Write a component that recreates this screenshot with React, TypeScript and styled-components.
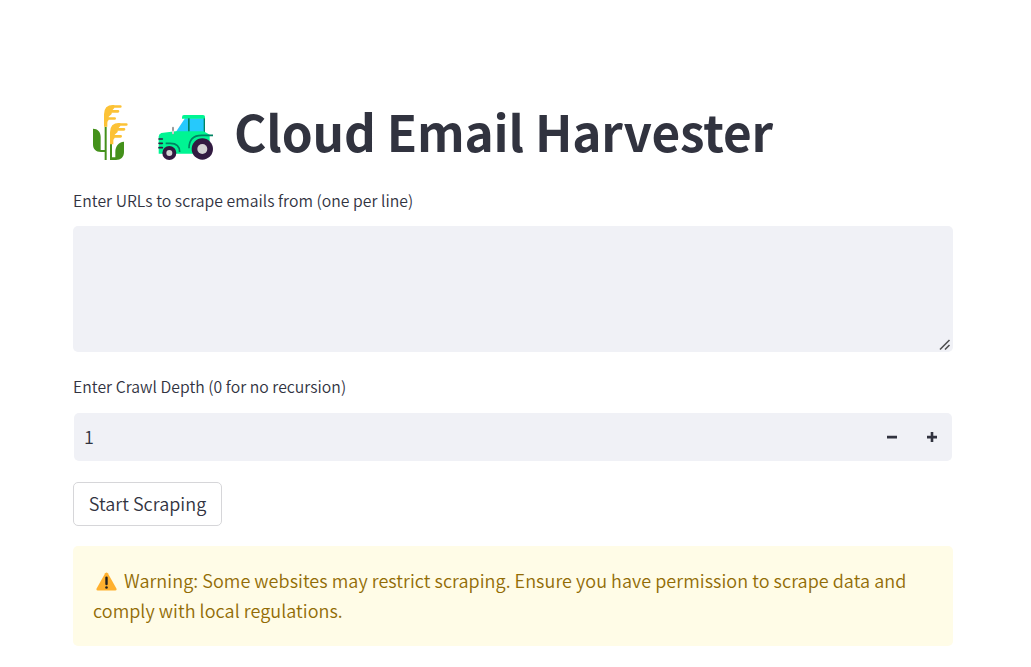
import React, { useState } from "react";
import styled, { createGlobalStyle } from "styled-components";

const GlobalStyle = createGlobalStyle`
  * {
    box-sizing: border-box;
  }
  body {
    margin: 0;
    background: #ffffff;
    color: #31333f;
    font-family: "Noto Sans CJK SC", "Noto Sans", sans-serif;
    font-size: 18px;
    font-weight: 350;
    letter-spacing: 0.05px;
  }
`;

const Page = styled.main`
  display: flex;
  flex-direction: column;
  width: 880px;
  margin: 0 auto 0 73px;
  padding-top: 101px;
`;

const Title = styled.h1`
  display: flex;
  align-items: flex-end;
  height: 66px;
  margin: 0 0 21px;
  padding: 0 0 7px 19px;
  font-size: 49.5px;
  font-weight: 700;
  line-height: 53px;
  white-space: nowrap;
`;

const TitleText = styled.span`
  margin-left: 20px;
  padding-bottom: 3px;
  letter-spacing: -0.17px;
`;

const HarvestSvg = styled.svg`
  flex: none;
  width: 37px;
  height: 56px;
  margin-right: 29px;
`;

const TractorSvg = styled.svg`
  flex: none;
  width: 56px;
  height: 46px;
`;

const Field = styled.div<{ $gap: number; $bottom: number }>`
  display: flex;
  flex-direction: column;
  gap: ${(p) => p.$gap}px;
  margin-bottom: ${(p) => p.$bottom}px;
`;

const Label = styled.label`
  height: 26px;
  font-size: 15.75px;
  line-height: 26px;
  letter-spacing: 0.03px;
  white-space: nowrap;
`;

const AreaWrapper = styled.div`
  position: relative;
  height: 126px;
`;

const Area = styled.textarea`
  display: block;
  width: 100%;
  height: 100%;
  padding: 12px;
  border: none;
  border-radius: 5px;
  outline: none;
  background: #f0f1f6;
  color: inherit;
  font: inherit;
  resize: none;
`;

const Grip = styled.svg`
  position: absolute;
  right: 2px;
  bottom: 1px;
  width: 12px;
  height: 12px;
`;

const NumberBox = styled.div`
  display: flex;
  height: 48px;
  margin: 0 1px;
  border-radius: 5px;
  background: #f0f1f6;
  overflow: hidden;
`;

const NumberInput = styled.input`
  flex: 1;
  min-width: 0;
  padding: 0 0 2px 10px;
  border: none;
  outline: none;
  background: transparent;
  color: inherit;
  font: inherit;
`;

const StepButton = styled.button`
  display: flex;
  align-items: center;
  justify-content: center;
  width: 40px;
  padding: 0;
  border: none;
  background: transparent;
  color: #31333f;
  cursor: pointer;
`;

const StartButton = styled.button`
  align-self: flex-start;
  width: 149px;
  height: 44px;
  margin-bottom: 20px;
  padding: 0 0 2px;
  border: 1px solid #d6d6d9;
  border-radius: 5px;
  background: #ffffff;
  color: inherit;
  font: inherit;
  letter-spacing: inherit;
  white-space: nowrap;
  cursor: pointer;
`;

const Alert = styled.div`
  height: 100px;
  padding: 19px 20px 21px;
  border-radius: 5px;
  background: #fffce7;
  color: #926c05;
  line-height: 30px;
`;

const AlertLine = styled.div`
  display: flex;
  align-items: center;
  height: 30px;
  white-space: nowrap;
`;

const WarningSvg = styled.svg`
  width: 21px;
  height: 19px;
  margin: 2px 7px 0 3px;
`;

const HarvestIcon = () => (
  <HarvestSvg viewBox="36 27 111 168">
    <path d="M39 101c14 0 23 9 23 24v40h12V95h6v100h-6v-24H63c-16 0-24-9-24-23z" fill="#44911b" />
    <path d="M90 146h6v41h10v-16c0-17 9-30 26-31v31c0 16-10 24-24 24H90z" fill="#44911b" />
    <g fill="#fcc236" stroke="#fcc236" strokeLinecap="round">
      <path d="M72 95V58q0-28 27-28h4v9l-8 9v9l-9 8v10q-4 4-4 8v12z" stroke="none" />
      <path d="M98 34.500h23M90 49h24M84 70.500h20" strokeWidth="8" />
      <path d="M90 148v-36q0-28 27-28h4v9l-8 9v9l-9 8v10q-4 4-4 8v11z" stroke="none" />
      <path d="M116 88.500h23M108 103h24M102 124h20" strokeWidth="8" />
    </g>
  </HarvestSvg>
);

const TractorIcon = () => (
  <TractorSvg viewBox="24 27 168 138">
    <path d="M105 40h57v45H75z" fill="#26c9fc" />
    <path d="M102 30h57q6 0 6 6v5H96v-4q0-7 6-7z" fill="#00f593" />
    <path d="M114 40h5v43h-5zM161 40h4v44h-4z" fill="#008463" />
    <path d="M34 84l42-5h85l18 10v20l-40 37H26V95q0-8 8-11z" fill="#00f593" />
    <path d="M47 115h14q28 0 28 26M117 130q0-39 38-39h34" fill="none" stroke="#008463" strokeWidth="5" />
    <path d="M66 68q0-3 3-3t3 3v20h-6z" fill="#9b9b9b" />
    <path d="M66 77h6v9h-6z" fill="#d3d3d3" />
    <path d="M27 102h10M27 115h10M27 128h10" stroke="#321b41" strokeWidth="5" strokeLinecap="round" />
    <circle cx="157" cy="132" r="32" fill="#321b41" />
    <circle cx="157" cy="132" r="15" fill="#d3d3d3" />
    <circle cx="58" cy="144" r="21" fill="#321b41" />
    <circle cx="58" cy="144" r="9" fill="#d3d3d3" />
  </TractorSvg>
);

const WarningIcon = () => (
  <WarningSvg viewBox="0 0 21 19">
    <path d="M9.200 1.300q1.300-1.700 2.600 0l8.600 15.200q.7 1.900-1.200 2H1.800Q-.1 18.400.6 16.500z" fill="#ffb02e" />
    <path d="M10.500 5.800v6.200" stroke="#212121" strokeWidth="2.400" strokeLinecap="round" />
    <circle cx="10.500" cy="15.500" r="1.300" fill="#212121" />
  </WarningSvg>
);

export default function App() {
  const [urls, setUrls] = useState("");
  const [depth, setDepth] = useState(1);

  return (
    <>
      <GlobalStyle />
      <Page>
        <Title>
          <HarvestIcon />
          <TractorIcon />
          <TitleText>Cloud Email Harvester</TitleText>
        </Title>
        <Field $gap={12} $bottom={22}>
          <Label htmlFor="urls">Enter URLs to scrape emails from (one per line)</Label>
          <AreaWrapper>
            <Area id="urls" value={urls} onChange={(e) => setUrls(e.target.value)} />
            <Grip viewBox="0 0 12 12" fill="none" stroke="#505050" strokeWidth="1.600">
              <path d="M1 10.500L10.500 1M6 10.500L10.500 6" />
            </Grip>
          </AreaWrapper>
        </Field>
        <Field $gap={13} $bottom={21}>
          <Label htmlFor="depth">Enter Crawl Depth (0 for no recursion)</Label>
          <NumberBox>
            <NumberInput
              id="depth"
              value={depth}
              onChange={(e) => setDepth(Number(e.target.value) || 0)}
            />
            <StepButton onClick={() => setDepth(Math.max(0, depth - 1))}>
              <svg width="10" height="10" viewBox="0 0 10 10">
                <path d="M0 3.700h10v2.900H0z" fill="currentColor" />
              </svg>
            </StepButton>
            <StepButton onClick={() => setDepth(depth + 1)}>
              <svg width="10" height="10" viewBox="0 0 10 10">
                <path d="M0 3.700h3.700V0h2.600v3.700H10v2.900H6.300V10H3.700V6.600H0z" fill="currentColor" />
              </svg>
            </StepButton>
          </NumberBox>
        </Field>
        <StartButton>Start Scraping</StartButton>
        <Alert>
          <AlertLine>
            <WarningIcon />
            Warning: Some websites may restrict scraping. Ensure you have permission to scrape data and
          </AlertLine>
          <AlertLine>comply with local regulations.</AlertLine>
        </Alert>
      </Page>
    </>
  );
}
